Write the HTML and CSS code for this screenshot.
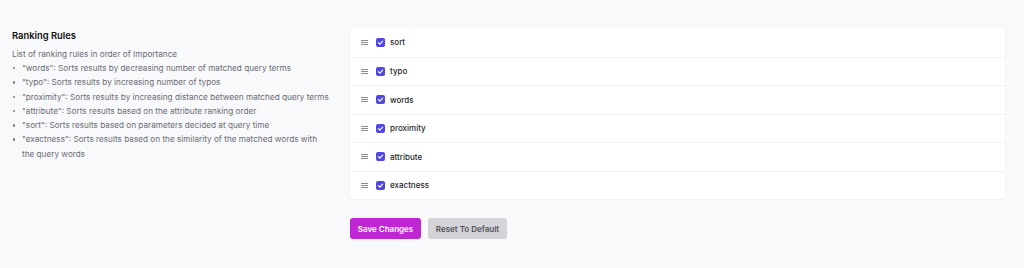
FILE: index.html
```html
<!DOCTYPE html>
<html>
<head>
<meta charset="utf-8">
<link rel="stylesheet" href="styles.css">
</head>
<body>
<div class="page">
  <section class="info">
    <h2 class="title">Ranking Rules</h2>
    <p class="subtitle">List of ranking rules in order of Importance</p>
    <ul class="rules">
      <li>"words": Sorts results by decreasing number of matched query terms</li>
      <li>"typo": Sorts results by increasing number of typos</li>
      <li>"proximity": Sorts results by increasing distance between matched query terms</li>
      <li>"attribute": Sorts results based on the attribute ranking order</li>
      <li>"sort": Sorts results based on parameters decided at query time</li>
      <li>"exactness": Sorts results based on the similarity of the matched words with<br>the query words</li>
    </ul>
  </section>
  <section class="main">
    <div class="card">
      <div class="row"><span class="handle"><i></i><i></i><i></i></span><span class="check"><svg viewBox="0 0 10 10"><path d="M2.6 5.2 L4.3 6.8 L7.4 3.4"/></svg></span><span class="label">sort</span></div>
      <div class="row"><span class="handle"><i></i><i></i><i></i></span><span class="check"><svg viewBox="0 0 10 10"><path d="M2.6 5.2 L4.3 6.8 L7.4 3.4"/></svg></span><span class="label">typo</span></div>
      <div class="row"><span class="handle"><i></i><i></i><i></i></span><span class="check"><svg viewBox="0 0 10 10"><path d="M2.6 5.2 L4.3 6.8 L7.4 3.4"/></svg></span><span class="label">words</span></div>
      <div class="row"><span class="handle"><i></i><i></i><i></i></span><span class="check"><svg viewBox="0 0 10 10"><path d="M2.6 5.2 L4.3 6.8 L7.4 3.4"/></svg></span><span class="label">proximity</span></div>
      <div class="row"><span class="handle"><i></i><i></i><i></i></span><span class="check"><svg viewBox="0 0 10 10"><path d="M2.6 5.2 L4.3 6.8 L7.4 3.4"/></svg></span><span class="label">attribute</span></div>
      <div class="row"><span class="handle"><i></i><i></i><i></i></span><span class="check"><svg viewBox="0 0 10 10"><path d="M2.6 5.2 L4.3 6.8 L7.4 3.4"/></svg></span><span class="label">exactness</span></div>
    </div>
    <div class="actions">
      <button class="btn btn-primary">Save Changes</button>
      <button class="btn btn-secondary">Reset To Default</button>
    </div>
  </section>
</div>
</body>
</html>
```
FILE: styles.css
```css
* { box-sizing: border-box; }
html, body { margin: 0; padding: 0; background: #f8f9fb; }
body { font-family: Inter, "Noto Sans", sans-serif; color: #18181b; }
.page {
  display: grid;
  grid-template-columns: 326px 655px;
  column-gap: 12px;
  padding: 28px 0 0 12px;
}
.info { padding-top: 2px; }
.title {
  margin: 0;
  font-size: 9.4px;
  font-weight: 600;
  line-height: 12px;
  color: #111;
}
.subtitle {
  margin: 6px 0 0;
  font-size: 8.2px;
  line-height: 12px;
  color: #6b6b73;
}
.rules {
  margin: 1px 0 0;
  padding: 0;
  list-style: none;
  font-size: 8.2px;
  line-height: 14.3px;
  color: #6b6b73;
}
.rules li {
  position: relative;
  padding-left: 10px;
  white-space: nowrap;
}
.rules li::before {
  content: "";
  position: absolute;
  left: 1px;
  top: 6px;
  width: 2.4px;
  height: 2.4px;
  border-radius: 50%;
  background: #7a7a82;
}
.card {
  background: #fff;
  border-radius: 3px;
  box-shadow: 0 0 2px rgba(0,0,0,0.06), 0 1px 2px rgba(0,0,0,0.03);
}
.row {
  height: 28.5px;
  display: flex;
  align-items: center;
  padding-left: 11px;
  border-top: 1px solid #f1f1f3;
}
.row:first-child { border-top: none; }
.handle {
  width: 7px;
  display: flex;
  flex-direction: column;
  gap: 1.2px;
  margin-right: 8px;
}
.handle i {
  display: block;
  height: 1px;
  background: #8d8d94;
}
.check {
  width: 9px;
  height: 9px;
  border-radius: 2px;
  background: #4f46e5;
  display: flex;
  margin-right: 5px;
}
.check svg { width: 9px; height: 9px; }
.check path { fill: none; stroke: #fff; stroke-width: 1.3; stroke-linecap: round; stroke-linejoin: round; }
.label {
  font-size: 8px;
  font-weight: 500;
  color: #27272a;
}
.actions {
  display: flex;
  gap: 7px;
  margin-top: 19px;
}
.btn {
  border: none;
  border-radius: 3px;
  height: 21px;
  padding: 0 6px;
  font-family: Inter, "Noto Sans", sans-serif;
  font-size: 8px;
  font-weight: 600;
}
.btn-primary { background: #c026d3; color: #fff; width: 71px; }
.btn-secondary { background: #d4d4d8; color: #52525b; width: 79px; }
```
